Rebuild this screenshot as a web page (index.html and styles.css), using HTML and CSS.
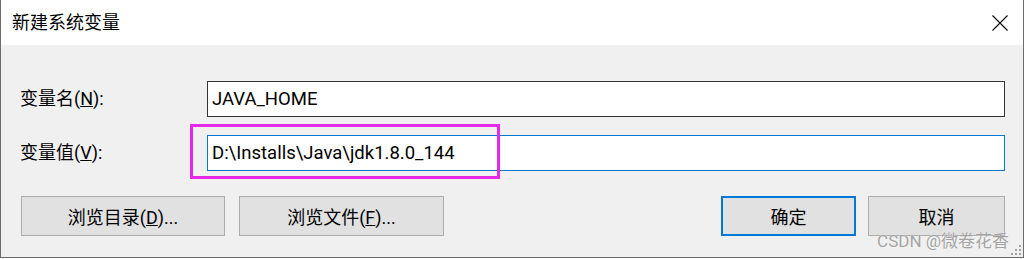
FILE: index.html
```html
<!DOCTYPE html>
<html lang="zh-CN">
  <head>
    <meta charset="UTF-8" />
    <title>新建系统变量</title>
    <link rel="stylesheet" href="styles.css">
  </head>
  <body>
    <div class="dialog">
      <div class="titlebar">
        <span class="title">新建系统变量</span>
        <svg class="close" width="16" height="16" viewBox="0 0 16 16">
          <path d="M0.5 0.5 L15.5 15.5 M15.5 0.5 L0.5 15.5" stroke="#000" stroke-width="1.1" fill="none" />
        </svg>
      </div>

      <div class="content">
        <div class="fields">
          <label class="label" for="varName">变量名(<u>N</u>):</label>
          <input class="field" id="varName" type="text" value="JAVA_HOME" readonly />
          <label class="label" for="varValue">变量值(<u>V</u>):</label>
          <input class="field field-focus" id="varValue" type="text" value="D:\Installs\Java\jdk1.8.0_144" readonly />
        </div>

        <div class="buttons">
          <div class="group">
            <button class="btn btn-wide">浏览目录(<u>D</u>)...</button>
            <button class="btn btn-wide2">浏览文件(<u>F</u>)...</button>
          </div>
          <div class="group group-right">
            <button class="btn btn-ok">确定</button>
            <button class="btn btn-cancel">取消</button>
          </div>
        </div>
      </div>

      <!-- 标注框 -->
      <div class="mark"></div>
      <div class="watermark">CSDN @微卷花香</div>
      <svg class="grip" width="12" height="12" viewBox="0 0 12 12">
        <rect x="9" y="1" width="2" height="2" fill="#a0a0a0" />
        <rect x="5" y="5" width="2" height="2" fill="#a0a0a0" />
        <rect x="9" y="5" width="2" height="2" fill="#a0a0a0" />
        <rect x="1" y="9" width="2" height="2" fill="#a0a0a0" />
        <rect x="5" y="9" width="2" height="2" fill="#a0a0a0" />
        <rect x="9" y="9" width="2" height="2" fill="#a0a0a0" />
      </svg>
    </div>
  </body>
</html>
```

FILE: styles.css
```css
body {
  margin: 0;
  background: #fff;
  font-family: Roboto, "Noto Sans CJK SC", sans-serif;
  font-size: 18px;
  color: #000;
}

.dialog {
  position: relative;
  width: 1022px;
  height: 257px;
  border: 1px solid #6b6b6b;
  border-top: none;
  background: #f0f0f0;
}

/* 标题栏 */
.titlebar {
  height: 45px;
  background: #fff;
  display: flex;
  align-items: center;
  justify-content: space-between;
  padding: 0 15px 0 11px;
}
.title {
  line-height: 1;
}
.close {
  display: block;
}

/* 表单 */
.content {
  padding: 36px 18px 0 19px;
}
.fields {
  display: grid;
  grid-template-columns: 187px 798px;
  grid-auto-rows: 36px;
  row-gap: 18px;
  align-items: center;
}
.label {
  line-height: 1;
}
.field {
  box-sizing: border-box;
  width: 798px;
  height: 36px;
  margin: 0;
  padding: 0 4px;
  border: 1px solid #333;
  background: #fff;
  font: inherit;
  font-size: 18.5px;
  color: #000;
  outline: none;
}
.field-focus {
  border-color: #0078d7;
}

/* 按钮 */
.buttons {
  margin-top: 25px;
  display: flex;
  justify-content: space-between;
  padding-left: 1px;
}
.group {
  display: flex;
  gap: 14px;
}
.group-right {
  gap: 12px;
}
.btn {
  box-sizing: border-box;
  height: 40px;
  margin: 0;
  padding: 0;
  border: 1px solid #adadad;
  background: #e1e1e1;
  font: inherit;
  color: #000;
}
.btn-wide {
  width: 204px;
}
.btn-wide2 {
  width: 205px;
}
.btn-ok {
  width: 135px;
  border: 2px solid #0078d7;
}
.btn-cancel {
  width: 137px;
}

.mark {
  position: absolute;
  left: 189px;
  top: 124px;
  width: 304px;
  height: 49px;
  border: 3px solid #e629e6;
}

.watermark {
  position: absolute;
  right: 14px;
  bottom: 7px;
  font-size: 17px;
  color: #a3a3a3;
  text-shadow: 0 0 1px #fff;
  line-height: 1;
}

.grip {
  position: absolute;
  right: 1px;
  bottom: 1px;
}
```
